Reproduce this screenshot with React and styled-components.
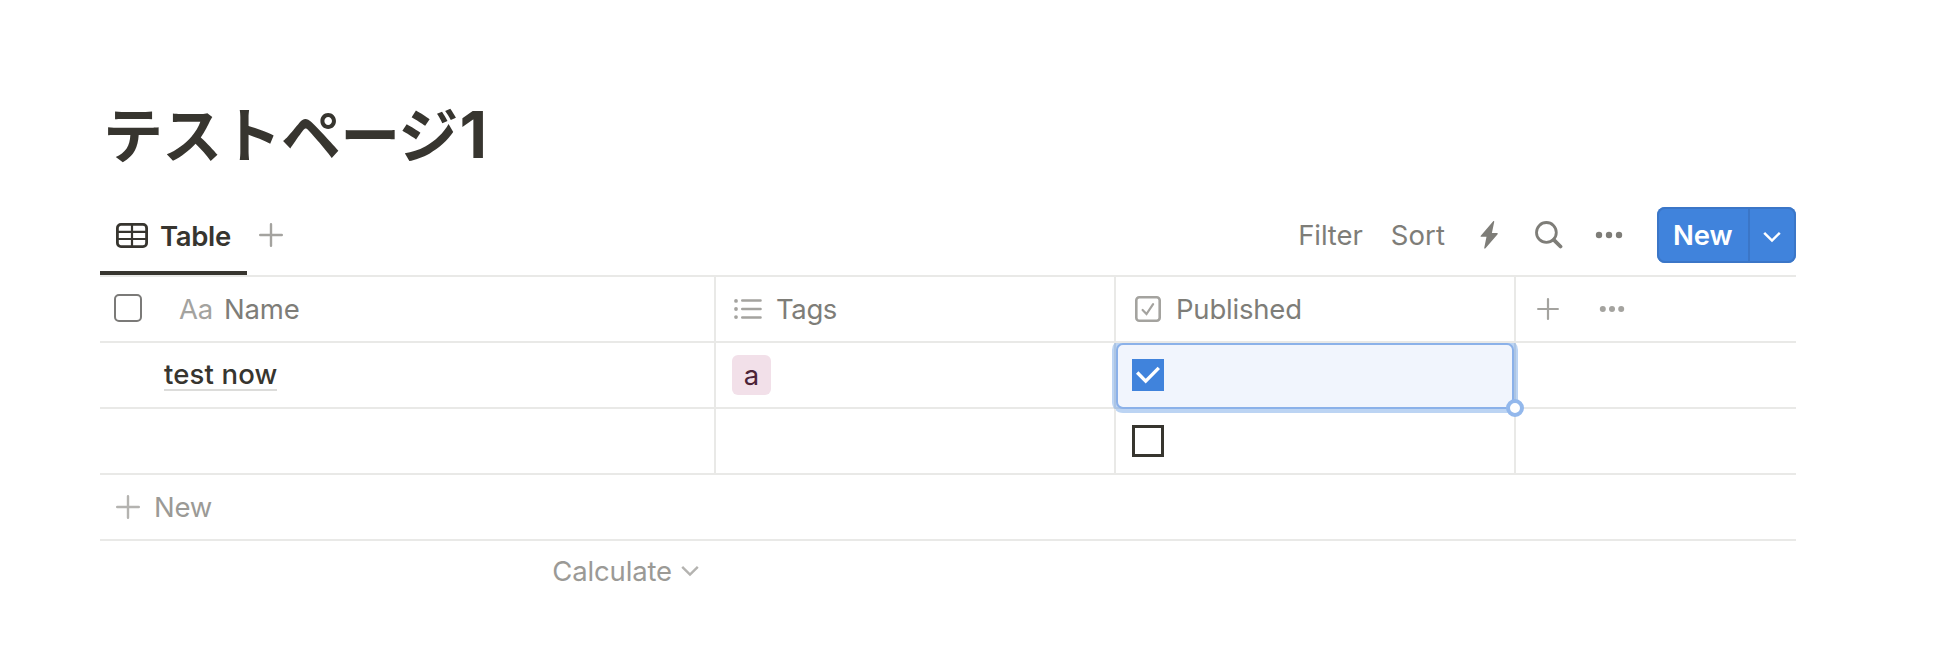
import React from 'react';
import styled, { createGlobalStyle } from 'styled-components';

const GlobalStyle = createGlobalStyle`
  * { box-sizing: border-box; }
  body {
    margin: 0;
    background: #fff;
    color: #37352f;
    font-family: Inter, "Noto Sans CJK JP", sans-serif;
    font-size: 27.5px;
    line-height: 40px;
  }
`;

const line = '#e9e9e7';
const muted = '#7e7d78';
const faint = '#a4a39f';

const Page = styled.main`
  width: 1948px;
  height: 652px;
  padding: 80px 152px 0 100px;
  overflow: hidden;
`;

const Title = styled.h1`
  height: 115px;
  margin: 0;
  padding: 12px 0 0 3px;
  font: 700 60px/80px "Noto Sans CJK JP", sans-serif;
  letter-spacing: -0.7px;
  white-space: nowrap;
`;

const TitleDigit = styled.span`
  margin-left: 2px;
  font-family: Inter, sans-serif;
  font-size: 64px;
`;

const ViewBar = styled.div`
  display: flex;
  justify-content: space-between;
  height: 82px;
  border-bottom: 2px solid ${line};
`;

const Tabs = styled.div`
  display: flex;
  align-items: stretch;
`;

const Tab = styled.div`
  display: flex;
  align-items: center;
  gap: 12px;
  width: 147px;
  padding-left: 16px;
  padding-top: 4px;
  border-bottom: 4px solid #37352f;
`;

const AddView = styled.div`
  display: flex;
  align-items: center;
  padding-left: 12px;
`;

const Toolbar = styled.div`
  display: flex;
  align-items: center;
`;

const Label = styled.span`
  padding-top: ${(p) => p.$drop || 0}px;
  color: ${(p) => p.$color || muted};
  font-weight: ${(p) => p.$weight || 400};
  letter-spacing: ${(p) => p.$track ?? -0.2}px;
  margin-left: ${(p) => p.$left || 0}px;
  white-space: nowrap;
`;

const Icon = styled.svg`
  display: block;
  flex: none;
  margin-left: ${(p) => p.$left || 0}px;
  fill: none;
  stroke: ${(p) => p.$color || faint};
  stroke-width: ${(p) => p.$stroke || 2.4};
  stroke-linecap: ${(p) => p.$cap || 'round'};
`;

const NewButton = styled.div`
  display: flex;
  width: 139px;
  height: 56px;
  margin-left: 33px;
  border-radius: 8px;
  background: #4083dc;
  box-shadow: inset 0 0 0 2px #3b76c7;
`;

const NewMain = styled.div`
  display: flex;
  align-items: center;
  width: 93px;
  padding-left: 16px;
  border-right: 2px solid #3b76c7;
`;

const NewMenu = styled.div`
  display: flex;
  align-items: center;
  padding-left: 13px;
  padding-top: 3px;
`;

const Row = styled.div`
  display: grid;
  grid-template-columns: 616px 400px 400px 1fr;
  height: 66px;
  border-bottom: 2px solid ${line};
`;

const Cell = styled.div`
  position: relative;
  display: flex;
  align-items: center;
  padding-left: ${(p) => p.$pad ?? 16}px;
  border-right: ${(p) => (p.$last ? 'none' : `2px solid ${line}`)};
`;

const SelectAll = styled.span`
  width: 28px;
  height: 28px;
  margin-bottom: 2px;
  border: 2px solid #7b7a78;
  border-radius: 5px;
`;

const RowTitle = styled.span`
  height: 34px;
  margin-top: -3px;
  line-height: 35px;
  font-weight: 500;
  letter-spacing: 0.15px;
  border-bottom: 2px solid #dcdcda;
`;

const Tag = styled.span`
  width: 39px;
  height: 40px;
  border-radius: 6px;
  background: #f2e0e9;
  color: #4c2337;
  text-align: center;
`;

const Checkbox = styled.span`
  position: relative;
  display: flex;
  width: 32px;
  height: 32px;
  border: ${(p) => (p.$checked ? 'none' : '3px solid #37352f')};
  background: ${(p) => (p.$checked ? '#4083dc' : '#fff')};
`;

const Selection = styled.div`
  position: absolute;
  inset: 0 0 -2px 0;
  border: 2px solid #8bb1e9;
  border-radius: 7px;
  background: #f1f5fd;
  box-shadow: 0 0 0 4px rgba(64, 131, 220, 0.35);
  clip-path: inset(0 -4px -4px -4px);
`;

const Handle = styled.div`
  position: absolute;
  z-index: 1;
  right: -10px;
  bottom: -10px;
  width: 18px;
  height: 18px;
  border: 4px solid #93b8ec;
  border-radius: 50%;
  background: #fff;
`;

const NewRow = styled.div`
  display: flex;
  align-items: center;
  height: 66px;
  padding-left: 16px;
  border-bottom: 2px solid ${line};
`;

const Calculate = styled.div`
  display: flex;
  align-items: center;
  justify-content: flex-end;
  width: 616px;
  height: 60px;
  padding-right: 17px;
`;

const Plus = ({ size = 24, left = 0, color = faint }) => (
  <Icon width={size} height={size} viewBox="0 0 24 24" $left={left} $color={color}>
    <path d="M12 1.2v21.6M1.2 12h21.6" />
  </Icon>
);

const Dots = ({ r, step, color, left }) => (
  <Icon width="30" height="8" viewBox="-15 -4 30 8" $left={left}>
    {[-step, 0, step].map((x) => (
      <circle key={x} cx={x} cy="0" r={r} fill={color} stroke="none" />
    ))}
  </Icon>
);

const Chevron = ({ color, left, stroke }) => (
  <Icon width="18" height="12" viewBox="0 0 18 12" $color={color} $left={left} $stroke={stroke} $cap="butt">
    <path d="M1.2 1.8 9 9.6l7.8-7.8" />
  </Icon>
);

export default function App() {
  return (
    <Page>
      <GlobalStyle />
      <Title>テストページ<TitleDigit>1</TitleDigit></Title>

      <ViewBar>
        <Tabs>
          <Tab>
            <Icon width="32" height="25" viewBox="0 0 32 25" $color="#37352f" $stroke={2.8} $cap="butt">
              <rect x="1.4" y="1.4" width="29.2" height="22.2" rx="3.6" />
              <path d="M1.4 8.9h29.2M1.4 16h29.2M16 1.4v22.2" strokeWidth="2.2" />
            </Icon>
            <Label $drop={2} $color="#37352f" $weight={600} $track={-0.35}>Table</Label>
          </Tab>
          <AddView><Plus /></AddView>
        </Tabs>
        <Toolbar>
          <Label $track={-0.1}>Filter</Label>
          <Label $left={28} $track={0.1}>Sort</Label>
          <Icon width="18" height="28" viewBox="0 0 18 28" $left={35}>
            <path d="M13.2.3 1 14.4c-.8.9-.5 1.4.5 1.4h5L4.3 26.6c-.2 1.2.5 1.5 1.2.7L17.4 13.4c.7-.8.5-1.4-.5-1.4h-5L14.2 1c.2-1-.4-1.3-1-.7Z" fill={muted} stroke="none" />
          </Icon>
          <Icon width="28" height="28" viewBox="0 0 28 28" $color={muted} $left={37}>
            <circle cx="11.4" cy="11.4" r="9.9" strokeWidth="2.8" />
            <path d="m18.8 18.8 6.7 6.7" strokeWidth="3.8" />
          </Icon>
          <Dots r={3.2} step={10} color={muted} left={31} />
          <NewButton>
            <NewMain><Label $color="#fff" $weight={600} $track={-0.15}>New</Label></NewMain>
            <NewMenu><Chevron color="#fff" stroke={2.5} left={0} /></NewMenu>
          </NewButton>
        </Toolbar>
      </ViewBar>

      <Row>
        <Cell $pad={14}>
          <SelectAll />
          <Label $left={37} $color={faint}>Aa</Label>
          <Label $left={11}>Name</Label>
        </Cell>
        <Cell $pad={18}>
          <Icon width="28" height="20" viewBox="0 0 28 20">
            <path d="M8.2 1.5h18.4M8.2 10h18.4M8.2 18.5h18.4" />
            <g fill={faint} stroke="none">
              <circle cx="2" cy="1.9" r="1.9" />
              <circle cx="2" cy="10" r="1.9" />
              <circle cx="2" cy="18.1" r="1.9" />
            </g>
          </Icon>
          <Label $left={14} $track={-0.4}>Tags</Label>
        </Cell>
        <Cell $pad={19}>
          <Icon width="26" height="26" viewBox="0 0 26 26">
            <rect x="1.3" y="1.3" width="23.4" height="23.4" rx="3" strokeWidth="2.6" />
            <path d="m7.6 14 3.9 4.1 6.6-10" strokeWidth="2.2" />
          </Icon>
          <Label $left={15}>Published</Label>
        </Cell>
        <Cell $last $pad={21}>
          <Plus size={22} />
          <Dots r={3} step={9.2} color={faint} left={38} />
        </Cell>
      </Row>

      <Row>
        <Cell $pad={64}><RowTitle>test now</RowTitle></Cell>
        <Cell><Tag>a</Tag></Cell>
        <Cell>
          <Selection />
          <Checkbox $checked>
            <Icon width="32" height="32" viewBox="0 0 32 32" $color="#fff" $stroke={3.4} $cap="butt">
              <path d="m5.2 13.5 8.5 8.6L26.8 8.9" />
            </Icon>
          </Checkbox>
          <Handle />
        </Cell>
        <Cell $last />
      </Row>

      <Row>
        <Cell />
        <Cell />
        <Cell><Checkbox /></Cell>
        <Cell $last />
      </Row>

      <NewRow>
        <Plus color="#b4b3b0" />
        <Label $left={14} $color="#9b9a96">New</Label>
      </NewRow>
      <Calculate>
        <Label $color="#9b9a96" $track={-0.15}>Calculate</Label>
        <Chevron color="#b4b3b0" left={9} stroke={2.4} />
      </Calculate>
    </Page>
  );
}
